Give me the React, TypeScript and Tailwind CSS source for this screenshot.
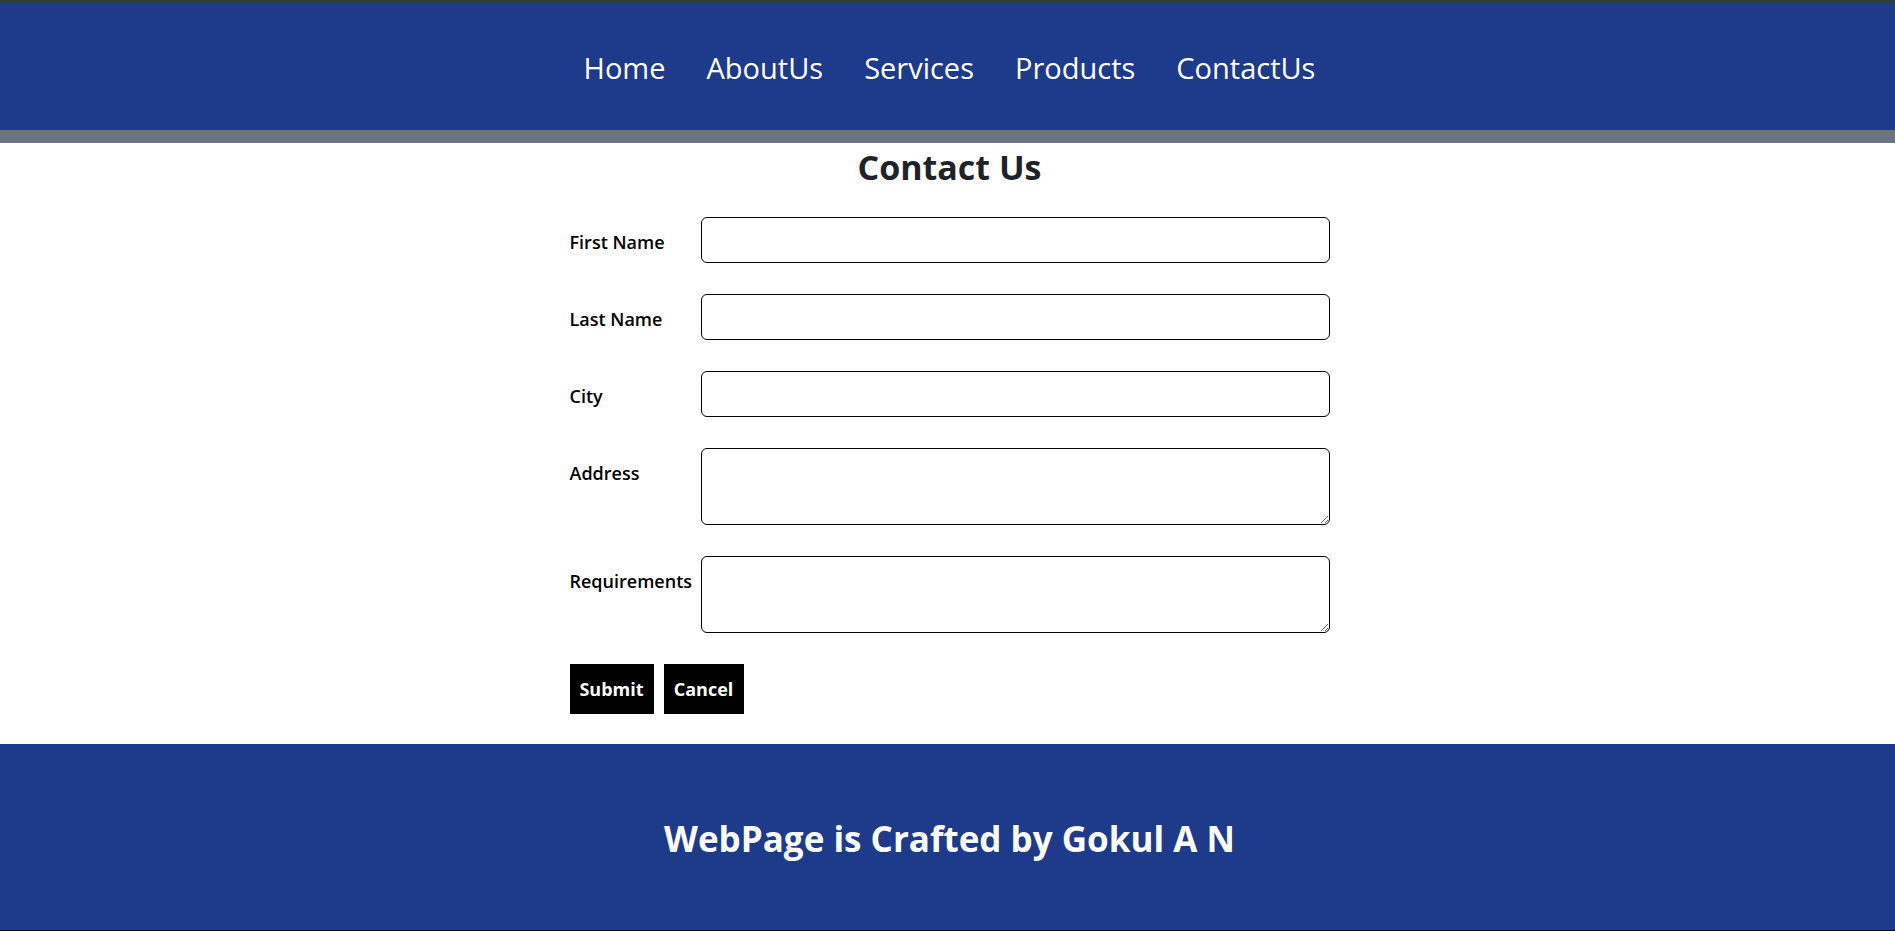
import React from 'react';

const links = ['Home', 'AboutUs', 'Services', 'Products', 'ContactUs'];

const fields = [
  { label: 'First Name', type: 'input' },
  { label: 'Last Name', type: 'input' },
  { label: 'City', type: 'input' },
  { label: 'Address', type: 'textarea' },
  { label: 'Requirements', type: 'textarea' },
];

export default function App() {
  return (
    <div className="min-h-screen bg-white font-['Open_Sans',sans-serif]">
      <div className="h-[3px] bg-[#2f3e46]" />
      <header className="h-[127px] bg-[#1e3a8a] flex items-center justify-center">
        <nav className="flex items-center gap-[41px] text-white text-[29px] pl-[4px] pt-[2px]">
          {links.map((l) => (
            <a key={l} href="#" className="leading-none">{l}</a>
          ))}
        </nav>
      </header>
      <div className="h-[13px] bg-[#6b7280]" />

      <section className="pt-[1px] pb-[30px] pl-[4px]">
        <h1 className="text-center text-[34px] font-bold text-[#1f2329] leading-[46px]">Contact Us</h1>
        <form className="w-[760px] mx-auto mt-[27px] flex flex-col gap-[31px]" onSubmit={(e) => e.preventDefault()}>
          {fields.map((f) => (
            <div key={f.label} className="grid grid-cols-[131px_1fr] items-start">
              <label className="text-[18px] font-semibold text-black pt-[12px]">{f.label}</label>
              {f.type === 'input' ? (
                <input className="h-[46px] border border-black rounded-[6px] px-2" />
              ) : (
                <textarea className="h-[77px] border border-black rounded-[6px] px-2 py-1" />
              )}
            </div>
          ))}
          <div className="flex gap-[10px]">
            <button className="h-[50px] w-[84px] bg-black text-white text-[18px] font-bold">Submit</button>
            <button className="h-[50px] w-[80px] bg-black text-white text-[18px] font-bold">Cancel</button>
          </div>
        </form>
      </section>

      <footer className="h-[187px] bg-[#1e3a8a] border-b border-black flex items-center justify-center">
        <h2 className="text-white text-[35px] font-bold pl-[4px] pt-[4px]">WebPage is Crafted by Gokul A N</h2>
      </footer>
    </div>
  );
}
